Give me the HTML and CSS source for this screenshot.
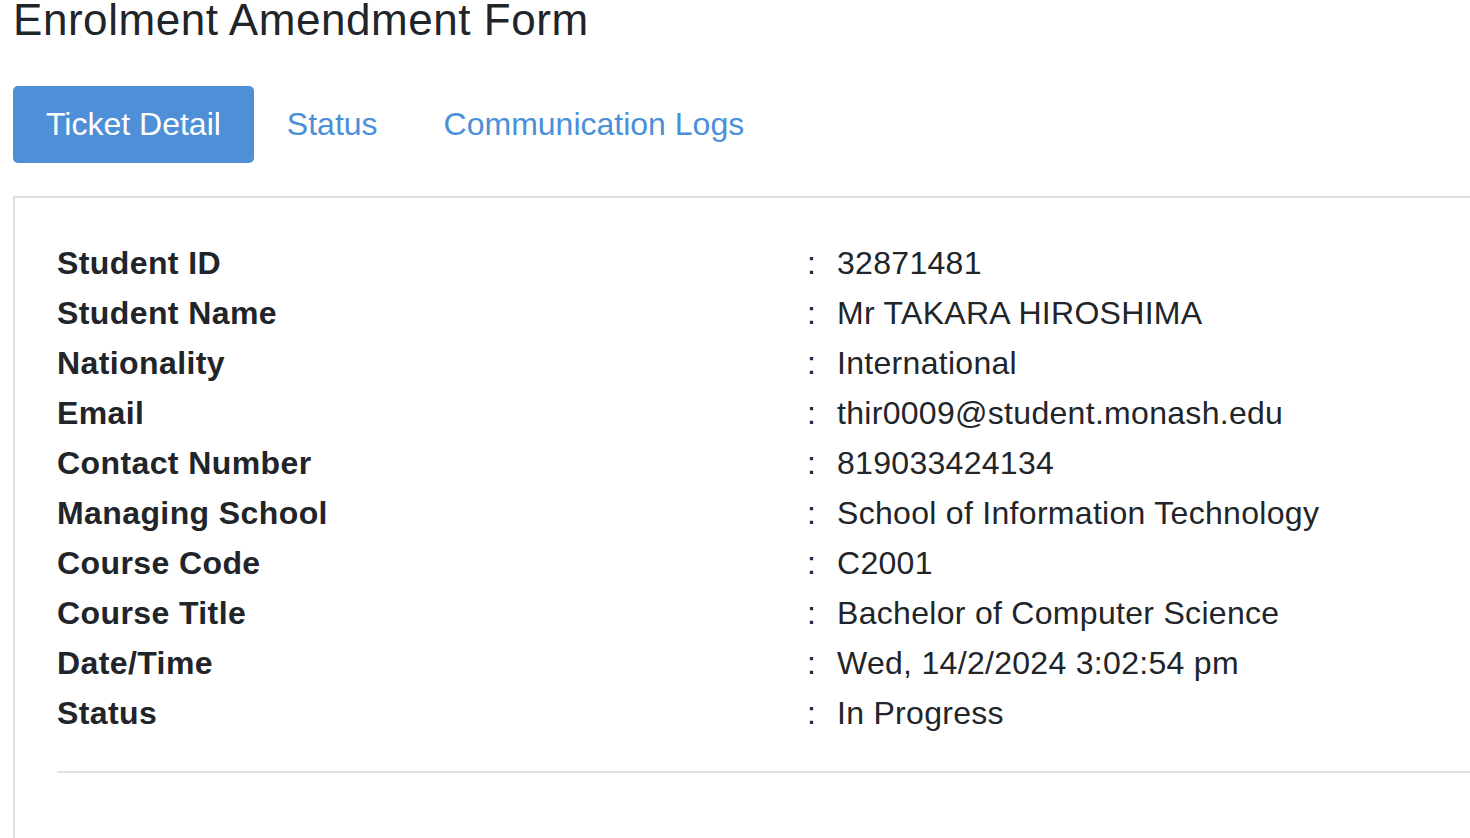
FILE: index.html
```html
<!DOCTYPE html>
<html>
<head>
<meta charset="utf-8">
<link rel="stylesheet" href="styles.css">
</head>
<body>
<div class="page">
  <h1 class="title">Enrolment Amendment Form</h1>
  <nav class="tabs">
    <a class="tab active">Ticket Detail</a>
    <a class="tab">Status</a>
    <a class="tab">Communication Logs</a>
  </nav>
  <section class="panel">
    <div class="details">
      <div class="row"><span class="label">Student ID</span><span class="colon">:</span><span class="value">32871481</span></div>
      <div class="row"><span class="label">Student Name</span><span class="colon">:</span><span class="value">Mr TAKARA HIROSHIMA</span></div>
      <div class="row"><span class="label">Nationality</span><span class="colon">:</span><span class="value">International</span></div>
      <div class="row"><span class="label">Email</span><span class="colon">:</span><span class="value">thir0009@student.monash.edu</span></div>
      <div class="row"><span class="label">Contact Number</span><span class="colon">:</span><span class="value">819033424134</span></div>
      <div class="row"><span class="label">Managing School</span><span class="colon">:</span><span class="value">School of Information Technology</span></div>
      <div class="row"><span class="label">Course Code</span><span class="colon">:</span><span class="value">C2001</span></div>
      <div class="row"><span class="label">Course Title</span><span class="colon">:</span><span class="value">Bachelor of Computer Science</span></div>
      <div class="row"><span class="label">Date/Time</span><span class="colon">:</span><span class="value">Wed, 14/2/2024 3:02:54 pm</span></div>
      <div class="row"><span class="label">Status</span><span class="colon">:</span><span class="value">In Progress</span></div>
    </div>
    <hr class="divider">
  </section>
</div>
</body>
</html>
```
FILE: styles.css
```css
html, body {
  margin: 0;
  padding: 0;
  background: #ffffff;
  overflow: hidden;
}
body {
  font-family: "Liberation Sans", Arial, sans-serif;
  color: #212529;
}
.page {
  padding-left: 13px;
  height: 838px;
  display: flex;
  flex-direction: column;
}
.title {
  margin: 0;
  font-weight: 400;
  font-size: 44px;
  line-height: 40px;
  letter-spacing: 0.55px;
  color: #212529;
}
.tabs {
  display: flex;
  align-items: center;
  margin-top: 46px;
}
.tab {
  font-size: 32px;
  color: #4a90d9;
  padding: 0 33px;
  height: 77px;
  line-height: 77px;
  border-radius: 5px;
  text-decoration: none;
}
.tab.active {
  background: #4f8fd8;
  color: #ffffff;
}
.panel {
  margin-top: 33px;
  border-top: 2px solid #dedede;
  border-left: 2px solid #dedede;
  flex: 1;
  padding: 40px 0 0 42px;
}
.details {
  display: flex;
  flex-direction: column;
}
.row {
  display: grid;
  grid-template-columns: 750px 30px 1fr;
  height: 50px;
  align-items: center;
  font-size: 32px;
}
.label {
  font-weight: 700;
  letter-spacing: 0.4px;
}
.value {
  letter-spacing: 0.3px;
}
.divider {
  margin: 33px 0 0 0;
  border: 0;
  border-top: 2px solid #e2e2e2;
}
```
